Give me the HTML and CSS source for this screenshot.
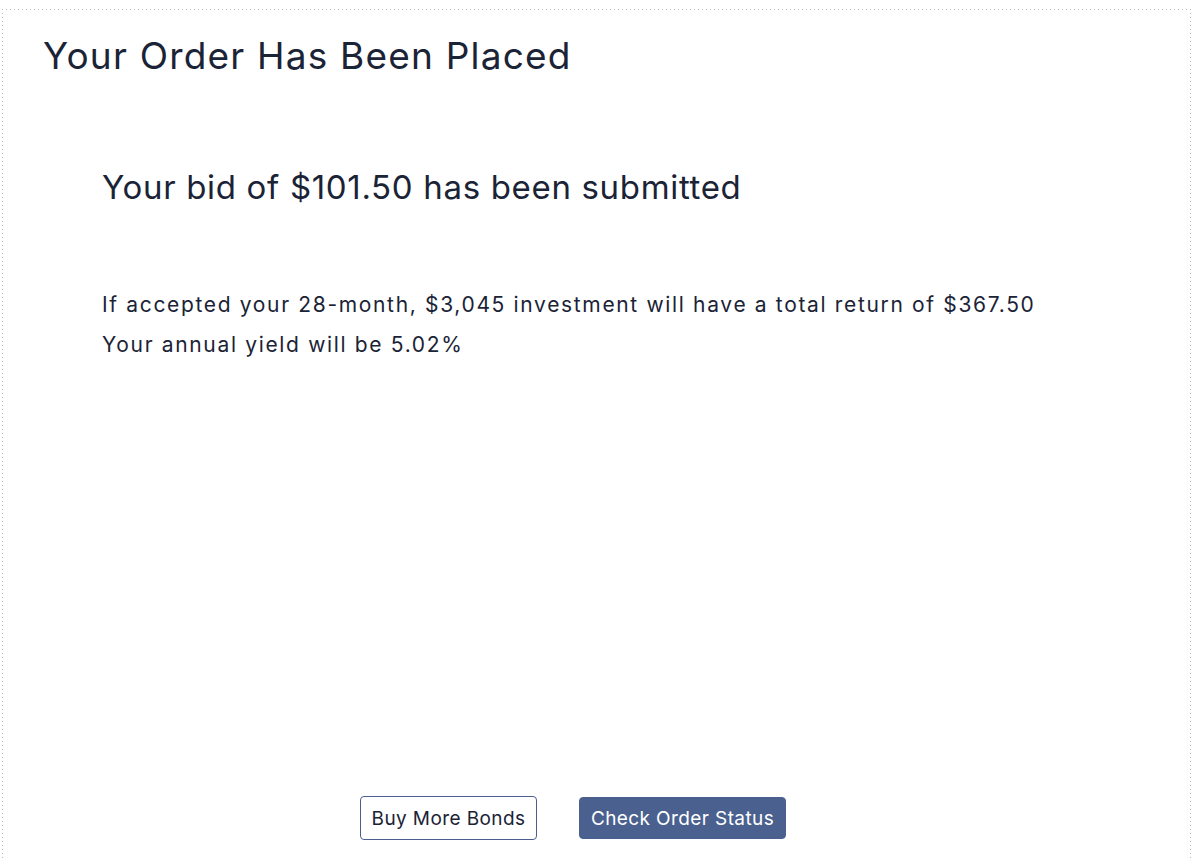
FILE: index.html
```html
<!DOCTYPE html>
<html>
<head>
<meta charset="utf-8">
<link rel="stylesheet" href="styles.css">
</head>
<body>
<div class="frame">
  <h1 class="title">Your Order Has Been Placed</h1>
  <div class="content">
    <h2 class="subtitle">Your bid of $101.50 has been submitted</h2>
    <p class="details">If accepted your 28-month, $3,045 investment will have a total return of $367.50<br>Your annual yield will be 5.02%</p>
  </div>
  <div class="actions">
    <button class="btn btn-outline">Buy More Bonds</button>
    <button class="btn btn-primary">Check Order Status</button>
  </div>
</div>
</body>
</html>
```

FILE: styles.css
```css
html, body {
  margin: 0;
  padding: 0;
  background: #ffffff;
  font-family: Inter, "Noto Sans", sans-serif;
  color: #1b2336;
}
.frame {
  margin: 9px 9px 0 2px;
  padding: 1px 0 0 1px;
  height: 870px;
  box-sizing: border-box;
  display: flex;
  flex-direction: column;
  background-image:
    repeating-linear-gradient(to right, #b9b9b9 0 1px, transparent 1px 4px),
    repeating-linear-gradient(to bottom, #b9b9b9 0 1px, transparent 1px 4px),
    repeating-linear-gradient(to bottom, #b9b9b9 0 1px, transparent 1px 4px);
  background-size: 100% 1px, 1px 100%, 1px 100%;
  background-position: left top, left top, right top;
  background-repeat: no-repeat;
}
.title {
  margin: 24px 0 0 40px;
  font-size: 37px;
  font-weight: 400;
  letter-spacing: 1.2px;
  line-height: 44px;
}
.content {
  padding-left: 99px;
  flex: 1;
}
.subtitle {
  margin: 89px 0 0 0;
  font-size: 33px;
  font-weight: 400;
  letter-spacing: 0.67px;
  line-height: 40px;
}
.details {
  margin: 78px 0 0 0;
  font-size: 21px;
  letter-spacing: 1.66px;
  line-height: 40px;
}
.actions {
  display: flex;
  justify-content: center;
  align-items: center;
  gap: 42px;
  padding: 0 0 28px 0;
  margin-right: 48px;
  margin-bottom: 11px;
}
.btn {
  font-family: Inter, "Noto Sans", sans-serif;
  font-size: 19px;
  letter-spacing: 0.4px;
  border-radius: 4px;
  padding: 0;
  cursor: pointer;
}
.btn-outline {
  width: 177px;
  height: 44px;
  background: #ffffff;
  color: #1b2336;
  border: 1px solid #4a5f8f;
}
.btn-primary {
  width: 207px;
  height: 42px;
  background: #4a6190;
  color: #ffffff;
  border: 1px solid #4a6190;
}
```
